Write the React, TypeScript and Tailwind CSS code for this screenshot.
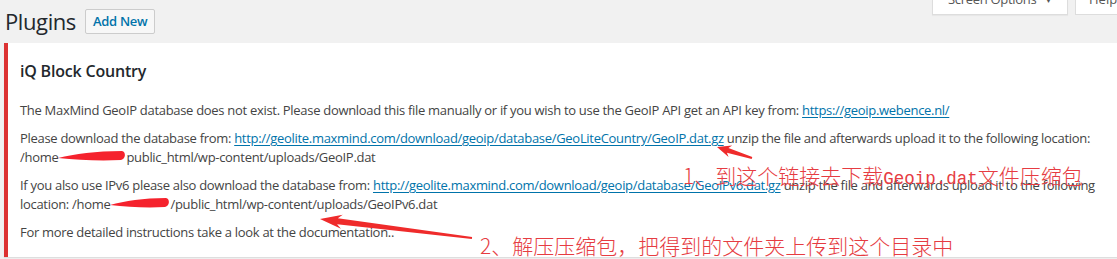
import React from 'react';

const font = { fontFamily: '"Open Sans", "Noto Sans", sans-serif' };

function Arrow({ x1, y1, x2, y2, head, hw, sw, tw }: { x1: number; y1: number; x2: number; y2: number; head: number; hw: number; sw: number; tw: number }) {
  const len = Math.hypot(x2 - x1, y2 - y1);
  const ang = (Math.atan2(y2 - y1, x2 - x1) * 180) / Math.PI;
  const pts = `0,0 ${head},${-hw} ${head * 0.8},${-sw} ${len},${-tw} ${len},${tw} ${head * 0.8},${sw} ${head},${hw}`;
  return <polygon points={pts} fill="#ef2b2b" transform={`translate(${x1} ${y1}) rotate(${ang})`} />;
}

// red scribble hiding part of a path
function Blob({ w }: { w: number }) {
  return (
    <span className="relative inline-block align-baseline" style={{ width: w }}>
      <svg className="absolute left-0 top-[1px]" width={w} height="14" viewBox={`0 0 ${w} 14`}>
        <path d={`M0 9 C ${w * 0.25} 5, ${w * 0.55} 2, ${w - 4} 2 C ${w} 2.5, ${w} 10, ${w - 5} 11 C ${w * 0.6} 12, ${w * 0.3} 11, 0 9 Z`} fill="#f5222d" />
      </svg>
      &nbsp;
    </span>
  );
}

const Link = ({ children }: { children: React.ReactNode }) => (
  <a className="text-[#0073aa] underline underline-offset-[2px]">{children}</a>
);

export default function App() {
  return (
    <div className="relative w-[1117px] h-[259px] overflow-hidden bg-[#f1f1f1] text-[#444]" style={font}>
      {/* header */}
      <div className="flex items-start justify-between">
        <div className="flex items-center gap-[9px] pl-[5px] pt-[9px]">
          <h1 className="text-[22px] leading-[25px] tracking-[-0.4px] text-[#23282d]">Plugins</h1>
          <button className="h-[25px] rounded-[2px] border border-[#ccc] bg-[#f7f7f7] px-[7px] text-[13px] font-semibold tracking-[-0.3px] text-[#0073aa]">
            Add New
          </button>
        </div>
        <div className="mr-[-20px] flex gap-[7px]">
          <div className="h-[15px] w-[136px] overflow-hidden border-x border-b border-[#ddd] bg-white shadow-[0_1px_1px_rgba(0,0,0,0.04)]">
            <div className="mt-[-10px] flex items-center justify-center gap-[8px] text-[13px] tracking-[-0.3px] text-[#555]">
              Screen Options <span className="text-[8px]">▼</span>
            </div>
          </div>
          <div className="h-[15px] w-[62px] overflow-hidden border-x border-b border-[#ddd] bg-white">
            <div className="mt-[-10px] pl-[13px] text-[13px] text-[#555]">Help</div>
          </div>
        </div>
      </div>

      {/* notice */}
      <div className="ml-[4px] mt-[9px] w-[1140px] border-l-4 border-[#dc3232] bg-white pb-[15px] pl-[12px] shadow-[0_1px_1px_rgba(0,0,0,0.08)]">
        <h2 className="pt-[17px] text-[16px] font-semibold leading-[22px] tracking-[-0.2px] text-[#23282d]">iQ Block Country</h2>
        <div className="mt-[19px] flex flex-col gap-[9px] text-[13px] leading-[19px] tracking-[-0.3px] whitespace-nowrap">
          <p>
            The MaxMind GeoIP database does not exist. Please download this file manually or if you wish to use the GeoIP API get an API key from: <Link>https://geoip.webence.nl/</Link>
          </p>
          <p>
            Please download the database from: <Link>http://geolite.maxmind.com/download/geoip/database/GeoLiteCountry/GeoIP.dat.gz</Link> unzip the file and afterwards upload it to the following location:
            <br />
            /home<Blob w={68} />public_html/wp-content/uploads/GeoIP.dat
          </p>
          <p>
            If you also use IPv6 please also download the database from: <Link>http://geolite.maxmind.com/download/geoip/database/GeoIPv6.dat.gz</Link> unzip the file and afterwards upload it to the following
            <br />
            location: /home<Blob w={60} />/public_html/wp-content/uploads/GeoIPv6.dat
          </p>
          <p>For more detailed instructions take a look at the documentation..</p>
        </div>
      </div>

      {/* annotations */}
      <svg className="pointer-events-none absolute inset-0" width="1117" height="259">
        <Arrow x1={717} y1={147} x2={752} y2={158} head={14} hw={6} sw={2.5} tw={1} />
        <Arrow x1={320} y1={219} x2={472} y2={238} head={22} hw={7} sw={3} tw={1} />
      </svg>
      <div className="absolute left-[683px] top-[162px] whitespace-nowrap text-[21px] font-light leading-[26px] text-[#e63c42]" style={{ fontFamily: '"Noto Sans CJK SC", sans-serif' }}>
        1、到这个链接去下载<span className="text-[17.5px]" style={{ fontFamily: '"Liberation Mono", monospace' }}>Geoip.dat</span>文件压缩包
      </div>
      <div className="absolute left-[480px] top-[232px] whitespace-nowrap text-[21px] font-light leading-[26px] text-[#e63c42]" style={{ fontFamily: '"Noto Sans CJK SC", sans-serif' }}>
        2、解压压缩包，把得到的文件夹上传到这个目录中
      </div>
    </div>
  );
}
